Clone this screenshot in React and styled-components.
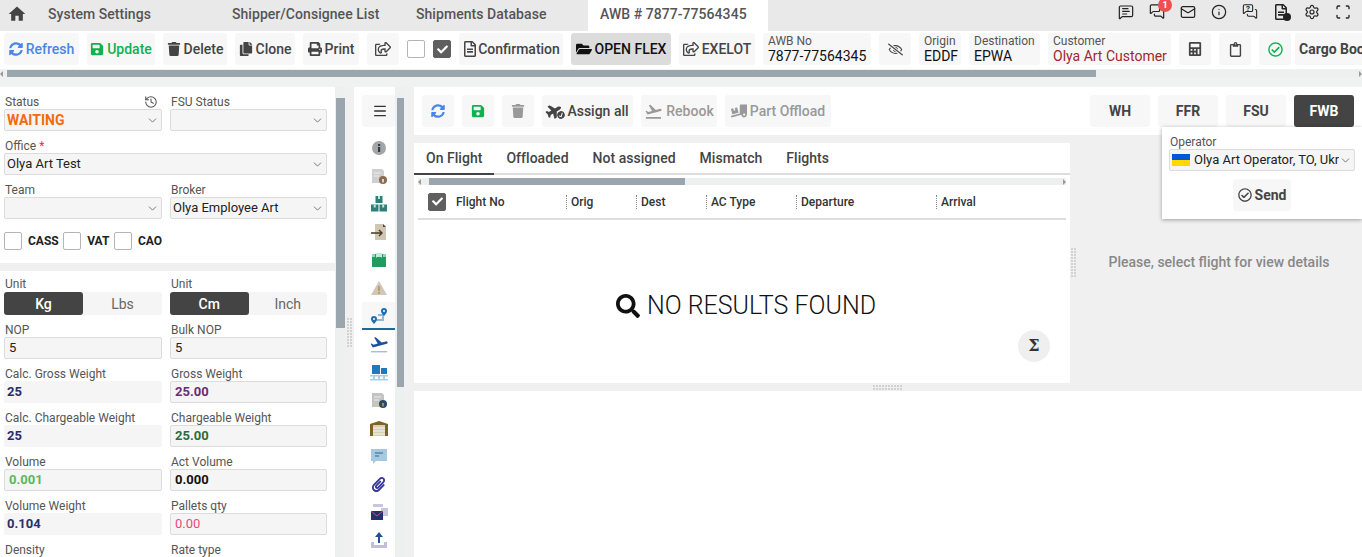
import styled, { createGlobalStyle } from 'styled-components'
import {
    ChevronDown, History, Mail, Info, Settings, Scan, MessageSquareText, MessagesSquare, Menu,
} from 'lucide-react'
import {
    FaSyncAlt, FaSave, FaTrash, FaCopy, FaPrint, FaRegShareSquare, FaRegFileAlt, FaFolderOpen, FaRegEyeSlash,
    FaCalculator, FaRegClipboard, FaRegCheckCircle, FaPaperclip, FaTruckLoading, FaPlane, FaCheckCircle, FaCheck,
    FaSearch,
} from 'react-icons/fa'
import { MdHome, MdFlightTakeoff } from 'react-icons/md'

const GlobalStyle = createGlobalStyle`
    html, body {
        margin: 0;
        height: 100%;
        overflow: hidden;
        background: #fff;
        font-family: Roboto, "Liberation Sans", sans-serif;
    }
    * { box-sizing: border-box; }
`

const Page = styled.div`
    display: flex;
    flex-direction: column;
    height: 557px;
    overflow: hidden;
`

const TabBar = styled.div`
    display: flex;
    align-items: center;
    height: 31px;
    flex-shrink: 0;
    background: #e9e9e9;
    padding-left: 7px;
`

const HomeLink = styled.div`
    display: flex;
    width: 41px;
    padding-bottom: 3px;
    color: #444;
`

const PageTab = styled.div`
    display: flex;
    align-items: center;
    height: 31px;
    width: ${p => p.$w}px;
    padding-left: ${p => p.$active ? 12 : 0}px;
    padding-bottom: 3px;
    font-size: 14px;
    font-weight: 500;
    letter-spacing: .05px;
    color: #555;
    background: ${p => p.$active ? '#fff' : 'transparent'};
`

const TopIcons = styled.div`
    display: flex;
    align-items: center;
    gap: 15px;
    margin-left: auto;
    padding: 0 11px 8px 0;
    color: #222;
`

const IconSlot = styled.div`
    position: relative;
    display: flex;
    align-items: center;
    justify-content: center;
    width: 16px;
    height: 18px;
`

const Badge = styled.span`
    position: absolute;
    top: -5px;
    right: -7px;
    width: 14px;
    height: 14px;
    border-radius: 50%;
    background: #ef4f4f;
    color: #fff;
    font-size: 9px;
    font-weight: 700;
    line-height: 14px;
    text-align: center;
`

const QuestionMark = styled.span`
    position: absolute;
    top: 1px;
    left: 1px;
    width: 10px;
    font-size: 8px;
    font-weight: 700;
    line-height: 10px;
    text-align: center;
`

const InfoDot = styled.span`
    position: absolute;
    right: -2px;
    bottom: 0;
    width: 8px;
    height: 8px;
    border-radius: 50%;
    background: #222;
`

const Toolbar = styled.div`
    display: flex;
    align-items: center;
    gap: 8px;
    height: 38px;
    flex-shrink: 0;
    padding: 0 4px 2px;
    background: #fff;
    overflow: hidden;
`

const Btn = styled.button`
    display: flex;
    align-items: center;
    justify-content: center;
    gap: ${p => p.$gap ?? 3}px;
    flex-shrink: 0;
    width: ${p => p.$w}px;
    height: 32px;
    padding: 0;
    border: 0;
    border-radius: 3px;
    background: ${p => p.$bg || '#f7f7f7'};
    color: ${p => p.$color || '#444'};
    font-family: inherit;
    font-size: 14px;
    font-weight: ${p => p.$weight || 500};
    white-space: nowrap;
    svg { flex-shrink: 0; }
`

const CargoBtn = styled(Btn)`
    justify-content: flex-start;
    margin-left: -4px;
    padding-left: 4px;
`

const Check = styled.div`
    display: flex;
    align-items: center;
    justify-content: center;
    flex-shrink: 0;
    width: 18px;
    height: 18px;
    border: 1px solid ${p => p.$on ? '#5f5f5f' : '#b5b5b5'};
    border-radius: 2px;
    background: ${p => p.$on ? '#5f5f5f' : '#fff'};
    color: #fff;
    font-size: 11px;
`

const InfoBlock = styled.div`
    display: flex;
    flex-direction: column;
    justify-content: center;
    flex-shrink: 0;
    width: ${p => p.$w}px;
    height: 32px;
    padding-left: 5px;
    border-radius: 3px;
    background: #f7f7f7;
`

const InfoLabel = styled.span`
    font-size: 12px;
    line-height: 14px;
    color: #555;
`

const InfoValue = styled.span`
    font-size: 14px;
    line-height: 16px;
    color: ${p => p.$color || '#111'};
    white-space: nowrap;
`

const HScrollStrip = styled.div`
    flex-shrink: 0;
    height: 18px;
    padding-top: 1px;
    background: #f0f2f2;
`

const HTrack = styled.div`
    position: relative;
    height: ${p => p.$h}px;
    background: #eef0f0;
`

const HThumb = styled.div`
    height: 100%;
    margin-left: ${p => p.$start}px;
    width: ${p => p.$size}px;
    background: #9aa5ad;
`

const Arrow = styled.span`
    position: absolute;
    top: 50%;
    ${p => p.$right ? 'right: 0' : 'left: 0'};
    transform: translateY(-50%);
    border-style: solid;
    border-width: 3px 0;
    border-color: transparent #999;
    border-${p => p.$right ? 'left' : 'right'}-width: 3px;
`

const Main = styled.div`
    display: flex;
    flex: 1;
    min-height: 0;
    background: #f0f0f0;
`

const LeftPanel = styled.div`
    width: 335px;
    flex-shrink: 0;
    background: #f0f0f0;
    overflow: hidden;
`

const FormCard = styled.div`
    background: #fff;
    padding: ${p => p.$top}px 4px 0;
    height: ${p => p.$h || 'auto'};
    margin-bottom: 8px;
`

const FormGrid = styled.div`
    display: grid;
    grid-template-columns: 158px 157px;
    column-gap: 8px;
    row-gap: 8px;
`

const Field = styled.div`
    grid-column: ${p => p.$wide ? '1 / 3' : 'auto'};
    min-width: 0;
`

const FieldLabel = styled.div`
    display: flex;
    justify-content: space-between;
    align-items: center;
    height: 14px;
    font-size: 12px;
    line-height: 14px;
    color: #555;
    padding-left: 1px;
    svg { margin-right: 4px; }
`

const Required = styled.span`
    color: #f0285a;
`

const Input = styled.div`
    display: flex;
    align-items: center;
    justify-content: space-between;
    height: 22px;
    padding: 0 ${p => p.$pad ?? 2}px ${p => p.$size ? 0 : 2}px ${p => p.$pad ?? 2}px;
    border: 1px solid ${p => p.$plain ? '#f5f5f5' : '#dcdcdc'};
    border-radius: 2px;
    background: #f5f5f5;
    font-size: ${p => p.$size || 13}px;
    font-weight: ${p => p.$weight || 400};
    color: ${p => p.$color || '#222'};
    white-space: nowrap;
    svg { color: #666; flex-shrink: 0; margin-top: ${p => p.$size ? 0 : 2}px; }
`

const CheckRow = styled.div`
    display: flex;
    align-items: center;
    height: 40px;
    padding-top: 3px;
    font-size: 12px;
    font-weight: 700;
    color: #222;
`

const CheckLabel = styled.span`
    margin: 0 4.5px 0 6px;
`

const Toggle = styled.div`
    display: grid;
    grid-template-columns: 1fr 1fr;
    height: 23px;
    margin-top: 1px;
    border-radius: 3px;
    background: #f5f5f5;
`

const ToggleOption = styled.div`
    display: flex;
    align-items: center;
    justify-content: center;
    border-radius: 3px;
    font-size: 14px;
    font-weight: ${p => p.$on ? 500 : 400};
    color: ${p => p.$on ? '#fff' : '#666'};
    background: ${p => p.$on ? '#444' : 'transparent'};
`

const VTrack = styled.div`
    position: relative;
    flex-shrink: 0;
    width: ${p => p.$w}px;
    background: #eef0f0;
    padding-left: ${p => p.$pad || 0}px;
    padding-top: ${p => p.$start}px;
`

const VThumb = styled.div`
    height: ${p => p.$size}px;
    background: #9aa5ad;
`

const Gutter = styled.div`
    position: relative;
    flex-shrink: 0;
    width: ${p => p.$w}px;
    background: #f0f0f0;
`

const Dots = styled.div`
    position: absolute;
    left: ${p => p.$x}px;
    top: ${p => p.$y}px;
    width: ${p => p.$w}px;
    height: ${p => p.$h}px;
    background-image: conic-gradient(from 0deg at 2px 2px, transparent 75%, #d2d2d2 0);
    background-size: 3px 3px;
`

const Sidebar = styled.div`
    display: flex;
    flex-direction: column;
    align-items: stretch;
    width: 41px;
    flex-shrink: 0;
    padding-top: 8px;
    background: #fff;
    overflow: hidden;
`

const MenuBtn = styled.div`
    display: flex;
    align-items: center;
    justify-content: center;
    height: 32px;
    margin: 0 0 7px 8px;
    padding-left: 2px;
    border-radius: 3px;
    background: #f7f7f7;
    color: #333;
`

const SideItem = styled.div`
    display: flex;
    align-items: center;
    justify-content: center;
    flex-shrink: 0;
    height: 28px;
    padding-left: ${p => p.$active ? 0 : 8}px;
    margin-left: ${p => p.$active ? 8 : 0}px;
    background: ${p => p.$active ? '#f7f7f7' : 'transparent'};
    box-shadow: ${p => p.$active ? 'inset 0 -2px 0 #1a6a9a' : 'none'};
`

const Content = styled.div`
    position: relative;
    display: flex;
    flex-direction: column;
    flex: 1;
    min-width: 0;
    background: #fff;
`

const ContentBar = styled.div`
    display: flex;
    align-items: center;
    gap: 8px;
    height: 48px;
    flex-shrink: 0;
    padding: 0 8px;
`

const BarRight = styled.div`
    display: flex;
    gap: 8px;
    margin-left: auto;
`

const AssignIcon = styled.span`
    position: relative;
    display: flex;
    width: 18px;
    height: 16px;
    svg:first-child { transform: rotate(-30deg); }
`

const AssignCheck = styled.span`
    position: absolute;
    right: -1px;
    bottom: 0;
    display: flex;
    border-radius: 50%;
    background: #f7f7f7;
`

const Split = styled.div`
    display: flex;
    height: 248px;
    flex-shrink: 0;
    background: #f0f0f0;
`

const FlightPanel = styled.div`
    position: relative;
    display: flex;
    flex-direction: column;
    width: 656px;
    flex-shrink: 0;
    margin-top: 8px;
    background: #fff;
`

const SubTabs = styled.div`
    display: flex;
    height: 32px;
    flex-shrink: 0;
    box-shadow: inset 0 -2px 0 #ddd;
`

const SubTab = styled.div`
    display: flex;
    align-items: center;
    padding: 0 12px 3px;
    font-size: 14px;
    font-weight: 500;
    letter-spacing: .03px;
    color: #444;
    box-shadow: ${p => p.$active ? 'inset 0 -2px 0 #444' : 'none'};
`

const TableScroll = styled.div`
    margin: 3px 4px 0;
`

const HeaderRow = styled.div`
    display: flex;
    align-items: center;
    height: 35px;
    flex-shrink: 0;
    margin: 0 4px;
    padding-left: 10px;
    border-bottom: 2px solid #ddd;
`

const HeaderCheck = styled(Check)`
    margin-right: 10px;
`

const HeaderCell = styled.div`
    display: flex;
    align-items: center;
    width: ${p => p.$w}px;
    height: 14px;
    flex-shrink: 0;
    padding-left: ${p => p.$first ? 0 : 4}px;
    border-left: ${p => p.$first ? 'none' : '1px dotted #888'};
    font-size: 12px;
    font-weight: 500;
    color: #333;
`

const EmptyState = styled.div`
    display: flex;
    align-items: center;
    justify-content: center;
    flex: 1;
    gap: 7px;
    padding: 8px 0 0 8px;
    font-size: 25px;
    font-weight: 300;
    color: #111;
`

const SumBtn = styled.div`
    position: absolute;
    right: 20px;
    bottom: 21px;
    width: 32px;
    height: 32px;
    border-radius: 50%;
    background: #efefef;
    color: #333;
    font-family: "DejaVu Serif", serif;
    font-size: 16px;
    font-weight: 700;
    line-height: 32px;
    text-align: center;
`

const DetailPane = styled.div`
    position: relative;
    display: flex;
    align-items: center;
    justify-content: center;
    flex: 1;
    padding: 6px 0 0 6px;
    font-size: 14px;
    font-weight: 500;
    color: #888;
`

const Popup = styled.div`
    position: absolute;
    top: 40px;
    right: 0;
    width: 200px;
    height: 92px;
    padding: 8px 7px;
    background: #fff;
    box-shadow: 0 1px 4px rgba(0, 0, 0, .35);
    z-index: 2;
`

const PopupLabel = styled.div`
    font-size: 12px;
    line-height: 14px;
    color: #555;
    padding-left: 1px;
`

const Flag = styled.span`
    flex-shrink: 0;
    width: 18px;
    height: 12px;
    margin: 2px 4px 0 0;
    background: linear-gradient(#0057d8 50%, #ffd800 50%);
`

const SelectText = styled.span`
    flex: 1;
    overflow: hidden;
`

const PopupSend = styled(Btn)`
    margin: 8px auto 0;
    font-weight: 700;
    color: #444;
`

const Resizer = styled.div`
    position: relative;
    height: 8px;
    flex-shrink: 0;
    background: #f0f0f0;
`

const BottomArea = styled.div`
    flex: 1;
    background: #fff;
`

// icons for the side rail, the app ships them as colored font glyphs
const Rail = ({ children }) => <svg width="18" height="18" viewBox="0 0 18 18">{children}</svg>

const railIcons = [
    <Rail key="info"><circle cx="9" cy="9" r="7" fill="#a5a5a5" /><rect x="8" y="8" width="2.2" height="5" fill="#2a3a55" /><rect x="8" y="5" width="2.2" height="2" fill="#2a3a55" /></Rail>,
    <Rail key="doc"><path d="M2 2h10l2 2v12H2z" fill="#cfcfcf" /><path d="M4 6h7M4 9h5" stroke="#eee" strokeWidth="1.2" /><circle cx="13" cy="13" r="4" fill="#8a6a50" /><rect x="12.3" y="12" width="1.4" height="3.4" fill="#fff" /></Rail>,
    <Rail key="boxes"><rect x="5.5" y="1" width="7" height="7" fill="#2f7f78" /><rect x="1" y="9.5" width="7.5" height="7" fill="#2f7f78" /><rect x="9.5" y="9.5" width="7.5" height="7" fill="#2f7f78" /><path d="M8 1h2v3H8zM3.700 9.500h2v3h-2zM12.200 9.500h2v3h-2z" fill="#bfe3dd" /></Rail>,
    <Rail key="import"><path d="M5 1h8l3 3v13H5z" fill="#cfc6b5" /><path d="M13 1l3 3h-3z" fill="#444" /><path d="M1 10h11M9 7l3 3-3 3" stroke="#4a3a20" strokeWidth="1.4" fill="none" /></Rail>,
    <Rail key="box"><path d="M2 3h14v13H2z" fill="#1f9d5f" /><path d="M6 2h6v5l-1-1H7l-1 1z" fill="#bfeadb" /><path d="M2 3h3v3H2zM13 3h3v3h-3z" fill="#8fd8bc" /></Rail>,
    <Rail key="warn"><path d="M9 2l8 14H1z" fill="#cdc8ba" /><rect x="8.2" y="7" width="1.6" height="5" fill="#b98f4a" /><rect x="8.2" y="13" width="1.6" height="1.6" fill="#b98f4a" /></Rail>,
    <Rail key="route"><path d="M5 13h8V8H8" stroke="#8fb8d8" strokeWidth="2" fill="none" /><path d="M4 17s-3-3-3-5a3 3 0 016 0c0 2-3 5-3 5z" fill="#1f6fb0" /><path d="M14 9s-3-3-3-5a3 3 0 016 0c0 2-3 5-3 5z" fill="#1f6fb0" /><circle cx="4" cy="12" r="1" fill="#fff" /><circle cx="14" cy="4" r="1" fill="#fff" /></Rail>,
    <Rail key="plane"><path d="M1 16h16v1.400H1z" fill="#a9bcdc" /><path d="M17.600 7.300c-.2-.7-.9-1.100-1.600-.9l-4.400 1.200L5.800 2.200l-1.600.4 3.500 6-4.200 1.100L1.800 8.400.6 8.700l2.200 3.800 14-3.700c.7-.2 1-.9.800-1.500z" fill="#1f4fa0" /></Rail>,
    <Rail key="pallet"><rect x="2" y="2" width="8" height="9" fill="#1f7ab8" /><rect x="11" y="5" width="6" height="6" fill="#1f7ab8" /><path d="M0 12h18v1.400H0zM0 16h18v1.400H0zM3 13h2v3H3zM8 13h2v3H8zM13 13h2v3h-2z" fill="#a8cfe6" /></Rail>,
    <Rail key="doc2"><path d="M2 2h10l2 2v12H2z" fill="#c4c4c4" /><path d="M4 6h7M4 9h5" stroke="#eee" strokeWidth="1.2" /><circle cx="13" cy="13" r="4" fill="#2a4a6a" /><rect x="12.3" y="12" width="1.4" height="3.4" fill="#e8a040" /></Rail>,
    <Rail key="warehouse"><path d="M0 17V5l9-3 9 3v12z" fill="#7d6424" /><rect x="3" y="6" width="12" height="11" fill="#d6d0b4" /><path d="M3 9h12M3 12h12M3 15h12" stroke="#fff" strokeWidth=".8" /></Rail>,
    <Rail key="comment"><path d="M1 2h16v12H6l-3 3v-3H1z" fill="#a8c8e0" /><path d="M5 6h8" stroke="#3a78a8" strokeWidth="1.2" /><path d="M5 9h4" stroke="#3a78a8" strokeWidth="1.2" /></Rail>,
    <FaPaperclip key="clip" size={15} color="#3a3a9a" />,
    <Rail key="mailbox"><path d="M3 1h10v3H3z" fill="#c9c5dc" /><path d="M11 5h7v8h-7z" fill="#c9c5dc" /><path d="M1 8h12v9H1z" fill="#26306f" /><path d="M1 8l6 5 6-5" stroke="#d84a6a" strokeWidth="1" fill="none" /></Rail>,
    <Rail key="upload"><path d="M1 11h3v3h10v-3h3v6H1z" fill="#c3bede" /><path d="M9 1l4 5h-3v6H8V6H5z" fill="#26508f" /></Rail>,
]

const formRows = [
    [{ label: 'NOP', value: '5', pad: 4 }, { label: 'Bulk NOP', value: '5', pad: 4 }],
    [{ label: 'Calc. Gross Weight', value: '25', color: '#2b2a6b', weight: 700, plain: true }, { label: 'Gross Weight', value: '25.00', color: '#6b2c73', weight: 700, pad: 4 }],
    [{ label: 'Calc. Chargeable Weight', value: '25', color: '#2b2a6b', weight: 700, plain: true }, { label: 'Chargeable Weight', value: '25.00', color: '#2e6b3e', weight: 700, pad: 4 }],
    [{ label: 'Volume', value: '0.001', color: '#5cb85c', weight: 700, pad: 4 }, { label: 'Act Volume', value: '0.000', color: '#111', weight: 700, pad: 4 }],
    [{ label: 'Volume Weight', value: '0.104', color: '#2b2f6b', weight: 700, plain: true }, { label: 'Pallets qty', value: '0.00', color: '#f0477a', pad: 4 }],
]

const Chevron = () => <ChevronDown size={13} strokeWidth={1.6} />

function TopToolbar() {
    return (
        <Toolbar>
            <Btn $w={75} $color="#4a86e8"><FaSyncAlt size={14} />Refresh</Btn>
            <Btn $w={68} $color="#10b14f"><FaSave size={14} />Update</Btn>
            <Btn $w={64}><FaTrash size={14} />Delete</Btn>
            <Btn $w={60}><FaCopy size={14} />Clone</Btn>
            <Btn $w={56}><FaPrint size={14} />Print</Btn>
            <Btn $w={32}><FaRegShareSquare size={16} /></Btn>
            <Check />
            <Check $on><FaCheck /></Check>
            <Btn $w={104} $gap={0}><FaRegFileAlt size={16} />Confirmation</Btn>
            <Btn $w={100} $bg="#dcdcdc" $color="#111"><FaFolderOpen size={16} />OPEN FLEX</Btn>
            <Btn $w={76}><FaRegShareSquare size={16} />EXELOT</Btn>
            <InfoBlock $w={108}><InfoLabel>AWB No</InfoLabel><InfoValue>7877-77564345</InfoValue></InfoBlock>
            <Btn $w={32}><FaRegEyeSlash size={15} /></Btn>
            <InfoBlock $w={42}><InfoLabel>Origin</InfoLabel><InfoValue>EDDF</InfoValue></InfoBlock>
            <InfoBlock $w={71}><InfoLabel>Destination</InfoLabel><InfoValue>EPWA</InfoValue></InfoBlock>
            <InfoBlock $w={123}><InfoLabel>Customer</InfoLabel><InfoValue $color="#a3262f">Olya Art Customer</InfoValue></InfoBlock>
            <Btn $w={32}><FaCalculator size={14} /></Btn>
            <Btn $w={32}><FaRegClipboard size={15} /></Btn>
            <Btn $w={32} $color="#10b14f"><FaRegCheckCircle size={15} /></Btn>
            <CargoBtn $w={110} $weight={700}>Cargo Booking</CargoBtn>
        </Toolbar>
    )
}

function ShipmentForm() {
    return (
        <LeftPanel>
            <FormCard $top={8} $h="176px">
                <FormGrid>
                    <Field>
                        <FieldLabel>Status<History size={14} strokeWidth={1.8} /></FieldLabel>
                        <Input $size={14} $weight={700} $color="#f26b10"><span>WAITING</span><Chevron /></Input>
                    </Field>
                    <Field>
                        <FieldLabel>FSU Status</FieldLabel>
                        <Input><span /><Chevron /></Input>
                    </Field>
                    <Field $wide>
                        <FieldLabel><span>Office <Required>*</Required></span></FieldLabel>
                        <Input><span>Olya Art Test</span><Chevron /></Input>
                    </Field>
                    <Field>
                        <FieldLabel>Team</FieldLabel>
                        <Input><span /><Chevron /></Input>
                    </Field>
                    <Field>
                        <FieldLabel>Broker</FieldLabel>
                        <Input><span>Olya Employee Art</span><Chevron /></Input>
                    </Field>
                </FormGrid>
                <CheckRow>
                    <Check /><CheckLabel>CASS</CheckLabel>
                    <Check /><CheckLabel>VAT</CheckLabel>
                    <Check /><CheckLabel>CAO</CheckLabel>
                </CheckRow>
            </FormCard>
            <FormCard $top={6}>
                <FormGrid>
                    <Field>
                        <FieldLabel>Unit</FieldLabel>
                        <Toggle><ToggleOption $on>Kg</ToggleOption><ToggleOption>Lbs</ToggleOption></Toggle>
                    </Field>
                    <Field>
                        <FieldLabel>Unit</FieldLabel>
                        <Toggle><ToggleOption $on>Cm</ToggleOption><ToggleOption>Inch</ToggleOption></Toggle>
                    </Field>
                    {formRows.flat().map(f => (
                        <Field key={f.label}>
                            <FieldLabel>{f.label}</FieldLabel>
                            <Input $pad={f.pad} $plain={f.plain} $color={f.color} $weight={f.weight}>{f.value}</Input>
                        </Field>
                    ))}
                    <Field><FieldLabel>Density</FieldLabel></Field>
                    <Field><FieldLabel>Rate type</FieldLabel></Field>
                </FormGrid>
            </FormCard>
        </LeftPanel>
    )
}

function FlightsTable() {
    return (
        <FlightPanel>
            <SubTabs>
                <SubTab $active>On Flight</SubTab>
                <SubTab>Offloaded</SubTab>
                <SubTab>Not assigned</SubTab>
                <SubTab>Mismatch</SubTab>
                <SubTab>Flights</SubTab>
            </SubTabs>
            <TableScroll>
                <HTrack $h={7}>
                    <Arrow />
                    <HThumb $start={11} $size={256} />
                    <Arrow $right />
                </HTrack>
            </TableScroll>
            <HeaderRow>
                <HeaderCheck $on><FaCheck /></HeaderCheck>
                <HeaderCell $first $w={110}>Flight No</HeaderCell>
                <HeaderCell $w={70}>Orig</HeaderCell>
                <HeaderCell $w={70}>Dest</HeaderCell>
                <HeaderCell $w={90}>AC Type</HeaderCell>
                <HeaderCell $w={140}>Departure</HeaderCell>
                <HeaderCell $w={100}>Arrival</HeaderCell>
            </HeaderRow>
            <EmptyState><FaSearch size={24} />NO RESULTS FOUND</EmptyState>
            <SumBtn>Σ</SumBtn>
        </FlightPanel>
    )
}

export default function App() {
    return (
        <Page>
            <GlobalStyle />
            <TabBar>
                <HomeLink><MdHome size={20} /></HomeLink>
                <PageTab $w={184}>System Settings</PageTab>
                <PageTab $w={184}>Shipper/Consignee List</PageTab>
                <PageTab $w={172}>Shipments Database</PageTab>
                <PageTab $w={180} $active>AWB # 7877-77564345</PageTab>
                <TopIcons>
                    <IconSlot><MessageSquareText size={16} strokeWidth={1.8} /></IconSlot>
                    <IconSlot><MessagesSquare size={17} strokeWidth={1.8} /><Badge>1</Badge></IconSlot>
                    <IconSlot><Mail size={16} strokeWidth={1.8} /></IconSlot>
                    <IconSlot><Info size={16} strokeWidth={1.8} /></IconSlot>
                    <IconSlot><MessagesSquare size={17} strokeWidth={1.6} /><QuestionMark>?</QuestionMark></IconSlot>
                    <IconSlot><FaRegFileAlt size={16} /><InfoDot /></IconSlot>
                    <IconSlot><Settings size={16} strokeWidth={1.8} /></IconSlot>
                    <IconSlot><Scan size={16} strokeWidth={2} /></IconSlot>
                </TopIcons>
            </TabBar>
            <TopToolbar />
            <HScrollStrip>
                <HTrack $h={7}>
                    <Arrow />
                    <HThumb $start={7} $size={1089} />
                    <Arrow $right />
                </HTrack>
            </HScrollStrip>
            <Main>
                <ShipmentForm />
                <VTrack $w={10} $pad={1} $start={11}><VThumb $size={230} /></VTrack>
                <Gutter $w={9}><Dots $x={2} $y={231} $w={6} $h={30} /></Gutter>
                <Sidebar>
                    <MenuBtn><Menu size={16} strokeWidth={2} /></MenuBtn>
                    {railIcons.map((icon, i) => (
                        <SideItem key={i} $active={i === 6}>{icon}</SideItem>
                    ))}
                </Sidebar>
                <VTrack $w={9} $pad={2} $start={11}><VThumb $size={289} /></VTrack>
                <Gutter $w={10} />
                <Content>
                    <ContentBar>
                        <Btn $w={32} $color="#4a86e8"><FaSyncAlt size={14} /></Btn>
                        <Btn $w={32} $color="#10b14f"><FaSave size={14} /></Btn>
                        <Btn $w={32} $color="#999"><FaTrash size={14} /></Btn>
                        <Btn $w={91}>
                            <AssignIcon><FaPlane size={16} /><AssignCheck><FaCheckCircle size={8} /></AssignCheck></AssignIcon>
                            Assign all
                        </Btn>
                        <Btn $w={76} $color="#999"><MdFlightTakeoff size={19} />Rebook</Btn>
                        <Btn $w={106} $color="#999"><FaTruckLoading size={16} />Part Offload</Btn>
                        <BarRight>
                            <Btn $w={60} $weight={700}>WH</Btn>
                            <Btn $w={60} $weight={700}>FFR</Btn>
                            <Btn $w={60} $weight={700}>FSU</Btn>
                            <Btn $w={60} $weight={700} $bg="#444" $color="#fff">FWB</Btn>
                        </BarRight>
                    </ContentBar>
                    <Split>
                        <FlightsTable />
                        <DetailPane>
                            <Dots $x={1} $y={113} $w={6} $h={30} />
                            Please, select flight for view details
                        </DetailPane>
                    </Split>
                    <Resizer><Dots $x={459} $y={2} $w={30} $h={6} /></Resizer>
                    <BottomArea />
                    <Popup>
                        <PopupLabel>Operator</PopupLabel>
                        <Input $color="#222">
                            <Flag />
                            <SelectText>Olya Art Operator, TO, Ukraine</SelectText>
                            <Chevron />
                        </Input>
                        <PopupSend $w={58}><FaRegCheckCircle size={14} />Send</PopupSend>
                    </Popup>
                </Content>
            </Main>
        </Page>
    )
}
